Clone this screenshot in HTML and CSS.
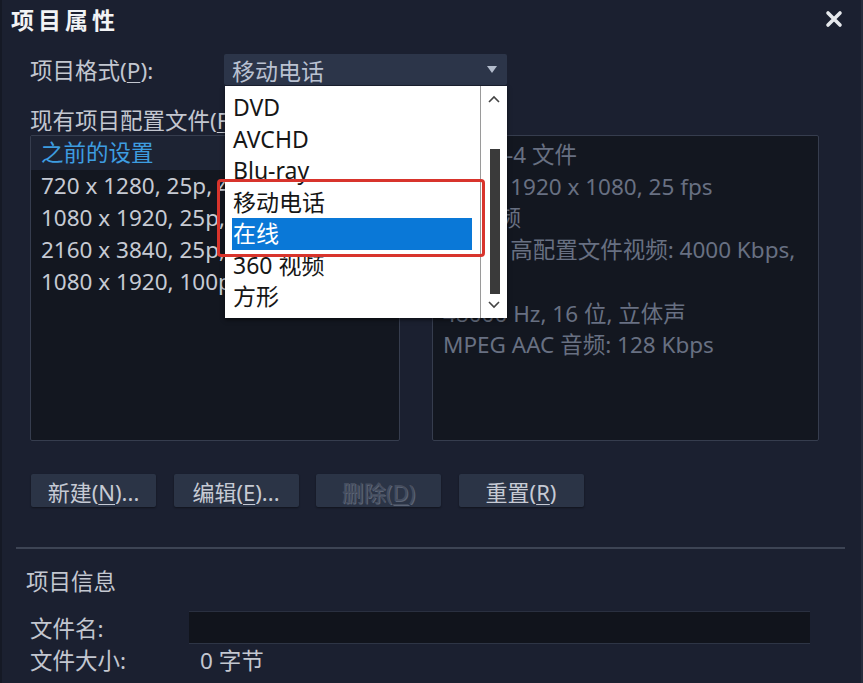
FILE: index.html
```html
<!DOCTYPE html>
<html lang="zh-CN">
<head>
    <meta charset="UTF-8">
    <title>项目属性</title>
    <link rel="stylesheet" href="styles.css">
</head>
<body>
    <div class="dialog">
        <!-- 标题栏 -->
        <div class="titlebar">
            <h1>项目属性</h1>
            <span class="close">
                <svg width="18" height="18" viewBox="0 0 18 18">
                    <path d="M3 3 L15 15 M15 3 L3 15" stroke="#e6e8ec" stroke-width="3.6" stroke-linecap="round"/>
                </svg>
            </span>
        </div>

        <!-- 项目格式 -->
        <div class="format-row">
            <label class="label">项目格式(<u>P</u>):</label>
            <div class="select">
                <span>移动电话</span>
                <span class="arrow"></span>
                <div class="dropdown">
                    <ul class="options">
                        <li>DVD</li>
                        <li>AVCHD</li>
                        <li>Blu-ray</li>
                        <li>移动电话</li>
                        <li class="selected">在线</li>
                        <li>360 视频</li>
                        <li>方形</li>
                    </ul>
                    <div class="scrollbar">
                        <svg width="14" height="10" viewBox="0 0 14 10">
                            <path d="M2 8 L7 3 L12 8" fill="none" stroke="#444" stroke-width="1.6"/>
                        </svg>
                        <div class="thumb"></div>
                        <svg width="14" height="10" viewBox="0 0 14 10">
                            <path d="M2 2 L7 7 L12 2" fill="none" stroke="#444" stroke-width="1.6"/>
                        </svg>
                    </div>
                </div>
                <div class="highlight-box"></div>
            </div>
        </div>

        <div class="label profiles-label">现有项目配置文件(<u>F</u>):</div>

        <div class="panels">
            <div class="panel profile-list">
                <div class="list-header">之前的设置</div>
                <div class="list-item">720 x 1280, 25p, 4000 Kbps</div>
                <div class="list-item">1080 x 1920, 25p, 8000 Kbps</div>
                <div class="list-item">2160 x 3840, 25p, 16000 Kbps</div>
                <div class="list-item">1080 x 1920, 100p, 8000 Kbps</div>
            </div>
            <div class="panel profile-info">
                <div>MPEG-4 文件</div>
                <div>H.264 1920 x 1080, 25 fps</div>
                <div>HD视频</div>
                <div>H.264 高配置文件视频: 4000 Kbps,</div>
                <div>VBR</div>
                <div>48000 Hz, 16 位, 立体声</div>
                <div>MPEG AAC 音频: 128 Kbps</div>
            </div>
        </div>

        <div class="buttons">
            <button>新建(<u>N</u>)...</button>
            <button>编辑(<u>E</u>)...</button>
            <button class="disabled">删除(<u>D</u>)</button>
            <button>重置(<u>R</u>)</button>
        </div>

        <div class="separator"></div>

        <!-- 项目信息 -->
        <div class="project-info">
            <div class="label info-title">项目信息</div>
            <div class="info-row">
                <span class="label info-label">文件名:</span>
                <div class="input"></div>
            </div>
            <div class="info-row size-row">
                <span class="label info-label">文件大小:</span>
                <span class="label size-value">0 字节</span>
            </div>
        </div>
    </div>
</body>
</html>
```

FILE: styles.css
```css
/* 基本样式 */
body {
    margin: 0;
    background: #1b2030;
    font-family: "Noto Sans", "Noto Sans CJK SC", sans-serif;
    color: #c5c9d2;
    overflow: hidden;
}
.dialog {
    width: 863px;
    height: 683px;
    box-sizing: border-box;
    border-left: 2px solid #151925;
    border-right: 2px solid #262c3c;
}
.label {
    font-size: 22.5px;
    color: #c3c7d0;
    white-space: nowrap;
}
u {
    text-decoration-thickness: 1px;
    text-underline-offset: 3px;
}
/* 标题栏 */
.titlebar {
    height: 38px;
    display: flex;
    align-items: center;
    justify-content: space-between;
    padding: 0 18px 0 9px;
    margin-bottom: 16px;
}
.titlebar h1 {
    margin: 0;
    font-size: 23px;
    font-weight: bold;
    letter-spacing: 4px;
    color: #f2f3f5;
}
.close {
    display: flex;
}
/* 项目格式 */
.format-row {
    display: flex;
    align-items: center;
    padding-left: 28px;
    height: 31px;
}
.format-row .label {
    width: 194px;
}
.select {
    position: relative;
    width: 283px;
    height: 31px;
    background: #2c3549;
    border-radius: 2px;
    display: flex;
    align-items: center;
    justify-content: space-between;
    padding: 0 10px 0 8px;
    box-sizing: border-box;
    font-size: 23px;
    color: #b9c1d1;
}
.arrow {
    width: 0;
    height: 0;
    border-left: 5px solid transparent;
    border-right: 5px solid transparent;
    border-top: 7px solid #b3bccc;
}
/* 下拉列表 */
.dropdown {
    position: absolute;
    top: 32px;
    left: 1px;
    width: 282px;
    height: 232px;
    background: #fff;
    display: flex;
    box-shadow: 0 2px 4px rgba(0, 0, 0, 0.5);
    z-index: 2;
}
.options {
    list-style: none;
    margin: 0;
    padding: 6px 0 0 0;
    flex: 1;
    border-right: 1px solid #9a9a9a;
}
.options li {
    height: 31.5px;
    line-height: 31.5px;
    margin: 0 8px 0 7px;
    padding-left: 1px;
    font-size: 23px;
    color: #161616;
}
.options li.selected {
    background: #0a78d7;
    color: #fff;
}
.scrollbar {
    width: 26px;
    display: flex;
    flex-direction: column;
    align-items: center;
    padding-top: 8px;
}
.thumb {
    width: 10px;
    height: 145px;
    background: #3a3a3a;
    margin: 45px 0 6px 1px;
}
/* 红色标记框 */
.highlight-box {
    position: absolute;
    left: -7px;
    top: 125px;
    width: 268px;
    height: 78px;
    box-sizing: border-box;
    border: 3px solid #d8342c;
    border-radius: 4px;
    z-index: 3;
}
.profiles-label {
    margin: 23px 0 0 28px;
    line-height: 26px;
    height: 26px;
}
/* 配置文件面板 */
.panels {
    display: flex;
    gap: 32px;
    padding-left: 28px;
    margin-top: 1px;
}
.panel {
    height: 306px;
    box-sizing: border-box;
    background: #131720;
    border: 1px solid #363d4e;
    border-radius: 2px;
    font-size: 22.5px;
    white-space: nowrap;
    overflow: hidden;
}
.profile-list {
    width: 370px;
}
.list-header {
    height: 34px;
    line-height: 34px;
    background: #1d2333;
    color: #3d9de0;
    padding-left: 10px;
}
.list-item {
    height: 32px;
    line-height: 32px;
    padding-left: 10px;
    color: #c6cad3;
}
.profile-info {
    width: 387px;
    padding: 3px 0 0 10px;
    color: #687082;
    line-height: 31.7px;
}
/* 按钮 */
.buttons {
    display: flex;
    gap: 17.5px;
    padding-left: 29px;
    margin-top: 33px;
}
button {
    width: 125px;
    height: 33px;
    border: none;
    border-radius: 2px;
    background: #2b3446;
    color: #c6cad4;
    font-family: inherit;
    font-size: 22px;
    padding: 0;
    white-space: nowrap;
    box-shadow: 0 1px 2px rgba(0, 0, 0, 0.4);
}
button.disabled {
    color: #454d5e;
    text-shadow: 1px 1px 0 #5b6476;
}
.separator {
    height: 2px;
    background: #3d4454;
    margin: 40px 16px 0 14px;
}
/* 项目信息 */
.project-info {
    padding-left: 24px;
}
.info-title {
    line-height: 28px;
    margin-top: 19px;
}
.info-row {
    display: flex;
    align-items: center;
    height: 33px;
    margin-top: 15px;
    padding-left: 4px;
}
.info-label {
    width: 159px;
}
.input {
    width: 621px;
    height: 33px;
    box-sizing: border-box;
    background: #11141c;
    border-top: 1px solid #2a3040;
    border-bottom: 1px solid #2e3545;
}
.size-row {
    margin-top: 0;
    height: 30px;
}
.size-value {
    padding-left: 11px;
}
```
